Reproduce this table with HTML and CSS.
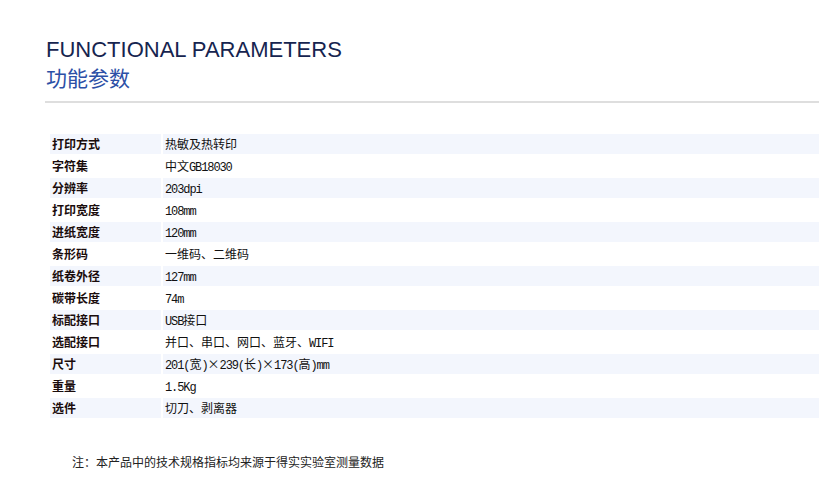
FILE: index.html
```html
<!DOCTYPE html>
<html lang="zh-CN">
<head>
<meta charset="utf-8">
<title>功能参数</title>
<link rel="stylesheet" href="styles.css">
</head>
<body>
<div class="page">
  <header class="head">
    <h1 class="title-en">FUNCTIONAL PARAMETERS</h1>
    <h2 class="title-cn">功能参数</h2>
  </header>
  <div class="rule"></div>
  <div class="params">
    <div class="row"><div class="key">打印方式</div><div class="val">热敏及热转印</div></div>
    <div class="row"><div class="key">字符集</div><div class="val">中文<span class="lat">GB18030</span></div></div>
    <div class="row"><div class="key">分辨率</div><div class="val"><span class="lat">203dpi</span></div></div>
    <div class="row"><div class="key">打印宽度</div><div class="val"><span class="lat">108mm</span></div></div>
    <div class="row"><div class="key">进纸宽度</div><div class="val"><span class="lat">120mm</span></div></div>
    <div class="row"><div class="key">条形码</div><div class="val">一维码、二维码</div></div>
    <div class="row"><div class="key">纸卷外径</div><div class="val"><span class="lat">127mm</span></div></div>
    <div class="row"><div class="key">碳带长度</div><div class="val"><span class="lat">74m</span></div></div>
    <div class="row"><div class="key">标配接口</div><div class="val"><span class="lat">USB</span>接口</div></div>
    <div class="row"><div class="key">选配接口</div><div class="val">并口、串口、网口、蓝牙、<span class="lat">WIFI</span></div></div>
    <div class="row"><div class="key">尺寸</div><div class="val"><span class="lat">201(</span>宽<span class="lat">)</span>×<span class="lat">239(</span>长<span class="lat">)</span>×<span class="lat">173(</span>高<span class="lat">)mm</span></div></div>
    <div class="row"><div class="key">重量</div><div class="val"><span class="lat">1.5Kg</span></div></div>
    <div class="row"><div class="key">选件</div><div class="val">切刀、剥离器</div></div>
  </div>
  <p class="note">注：本产品中的技术规格指标均来源于得实实验室测量数据</p>
</div>
</body>
</html>
```

FILE: styles.css
```css
html, body {
  margin: 0;
  padding: 0;
  background: #fff;
  overflow: hidden;
}

.page {
  padding-top: 37px;
  font-family: "Noto Sans CJK SC", sans-serif;
}

.head {
  margin-left: 46px;
}

.title-en {
  margin: 0;
  font-family: "Liberation Sans", Arial, sans-serif;
  font-weight: normal;
  font-size: 22px;
  line-height: 26px;
  color: #16244f;
}

.title-cn {
  margin: 0;
  font-family: "Noto Sans CJK SC", sans-serif;
  font-weight: normal;
  font-size: 21px;
  line-height: 28px;
  color: #2c4fa6;
}

.rule {
  margin: 10px 0 0 45px;
  height: 2px;
  background: #dedede;
}

.params {
  display: grid;
  row-gap: 2px;
  margin: 31px 0 0 50px;
  font-size: 12px;
}

.row {
  display: grid;
  grid-template-columns: 111px 1fr;
  column-gap: 2px;
}

.key,
.val {
  height: 20px;
  padding: 0 2px;
  line-height: 20px;
  white-space: nowrap;
  overflow: hidden;
}

.row:nth-child(odd) .key,
.row:nth-child(odd) .val {
  background: #f3f6fd;
}

.key {
  font-weight: bold;
  color: #1a0c0c;
}

.val {
  color: #111;
}

.lat {
  font-family: "Liberation Mono", monospace;
  letter-spacing: -1.1px;
}

.note {
  margin: 34px 0 0 72px;
  font-size: 12px;
  line-height: 20px;
  color: #222;
}
```
